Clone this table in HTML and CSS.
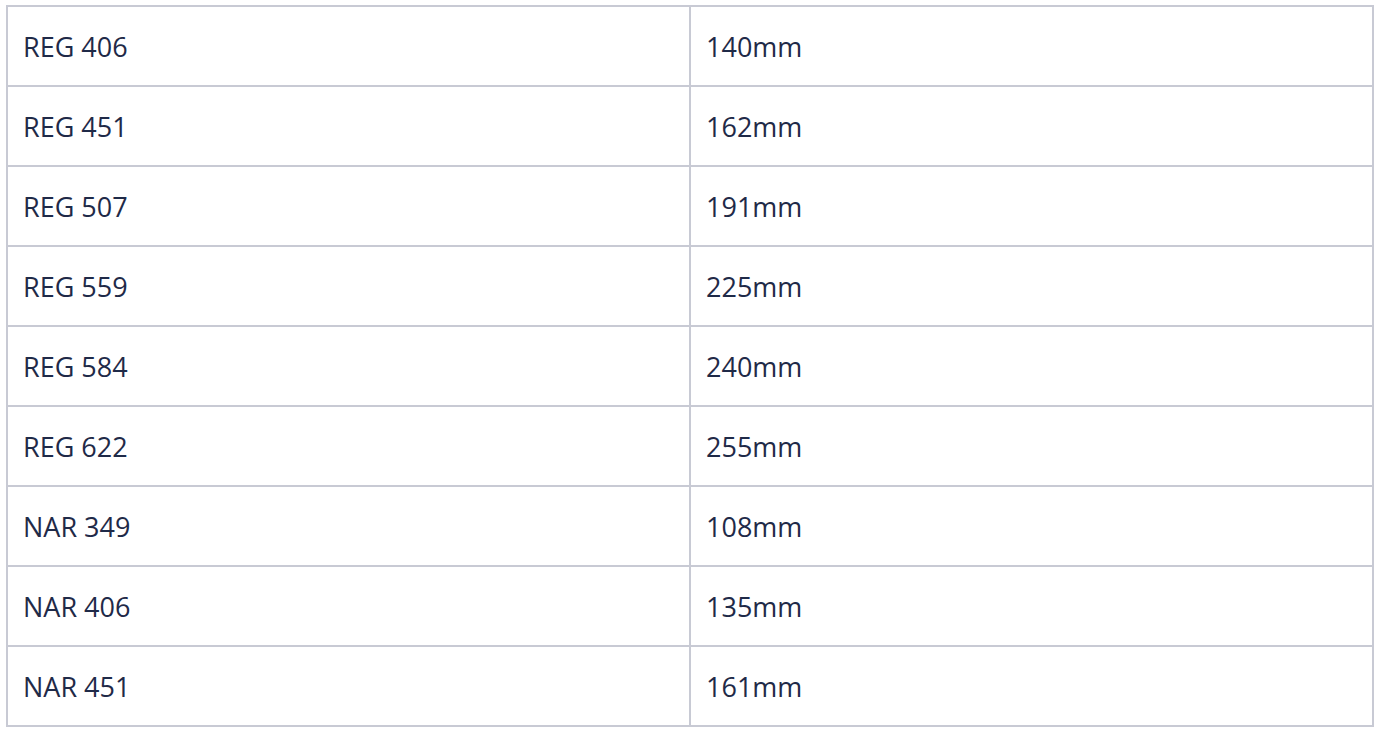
FILE: index.html
```html
<!DOCTYPE html>
<html>
<head>
<meta charset="utf-8">
<link rel="stylesheet" href="styles.css">
</head>
<body>
<div class="wrap">
<table class="sizes">
<tbody>
<tr><td>REG 406</td><td>140mm</td></tr>
<tr><td>REG 451</td><td>162mm</td></tr>
<tr><td>REG 507</td><td>191mm</td></tr>
<tr><td>REG 559</td><td>225mm</td></tr>
<tr><td>REG 584</td><td>240mm</td></tr>
<tr><td>REG 622</td><td>255mm</td></tr>
<tr><td>NAR 349</td><td>108mm</td></tr>
<tr><td>NAR 406</td><td>135mm</td></tr>
<tr><td>NAR 451</td><td>161mm</td></tr>
</tbody>
</table>
</div>
</body>
</html>
```
FILE: styles.css
```css
html, body {
  margin: 0;
  padding: 0;
  background: #ffffff;
}
.wrap {
  padding: 5px 2px 6px 6px;
}
.sizes {
  width: 1368px;
  border-collapse: collapse;
  font-family: "Open Sans", "Noto Sans", sans-serif;
  font-size: 27px;
  color: #1f2a48;
  table-layout: fixed;
}
.sizes td {
  border: 2px solid #c8cad4;
  height: 80px;
  padding: 0 15px;
  vertical-align: middle;
  box-sizing: border-box;
  width: 50%;
}
```
